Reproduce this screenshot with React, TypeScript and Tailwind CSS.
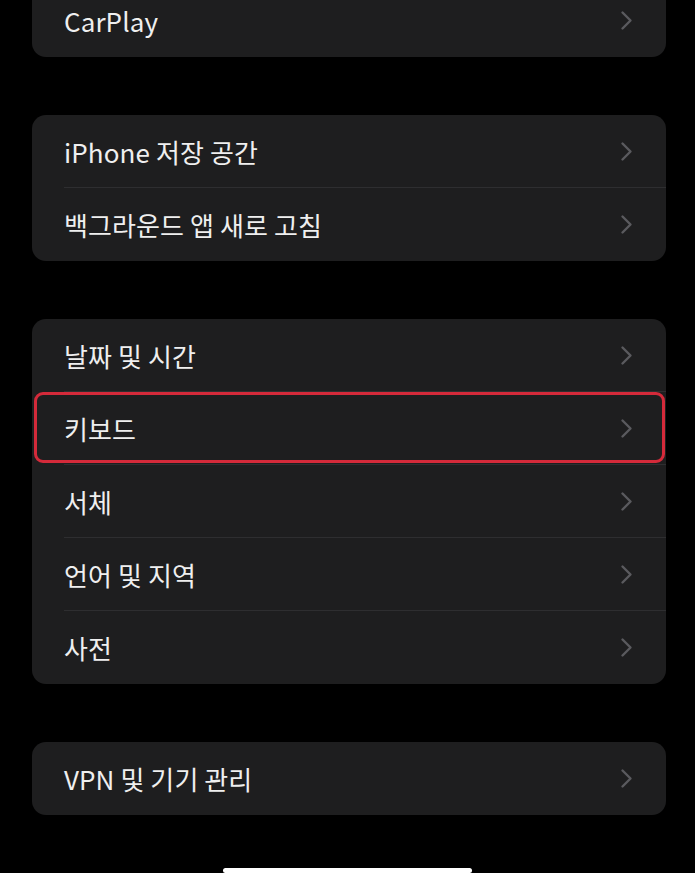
interface Row {
  label: string;
  highlight?: boolean;
}

const groups: Row[][] = [
  [{ label: 'CarPlay' }],
  [{ label: 'iPhone 저장 공간' }, { label: '백그라운드 앱 새로 고침' }],
  [
    { label: '날짜 및 시간' },
    { label: '키보드', highlight: true },
    { label: '서체' },
    { label: '언어 및 지역' },
    { label: '사전' },
  ],
  [{ label: 'VPN 및 기기 관리' }],
];

function Chevron() {
  return (
    <svg width="13" height="21" viewBox="0 0 13 21" fill="none">
      <path
        d="M2.5 2.5 L10.5 10.5 L2.5 18.5"
        stroke="#5a5a5e"
        strokeWidth="2.4"
        strokeLinecap="round"
        strokeLinejoin="round"
      />
    </svg>
  );
}

function SettingsRow({ row, last }: { row: Row; last: boolean }) {
  return (
    <div className="relative h-[73px] flex items-center pl-[32px]">
      <div
        className={
          'flex-1 h-full flex items-center pr-[33px] ' +
          (last ? '' : 'border-b border-[#2e2e30]')
        }
      >
        <span className="flex-1 text-[26px] text-[#efefef] tracking-[0.1px]">{row.label}</span>
        <Chevron />
      </div>
      {row.highlight && (
        <div className="absolute left-[2px] right-[1px] top-0 bottom-[2px] border-[3px] border-[#d42a3a] rounded-[9px]" />
      )}
    </div>
  );
}

export default function App() {
  return (
    <div
      className="h-[873px] bg-black overflow-hidden flex flex-col"
      style={{ fontFamily: '"Noto Sans CJK KR", Inter, sans-serif' }}
    >
      <div className="pl-[32px] pr-[29px] -mt-[16px] flex flex-col gap-[58px]">
        {groups.map((group, i) => (
          <div key={i} className="bg-[#1e1e1f] rounded-[14px] overflow-hidden">
            {group.map((row, j) => (
              <SettingsRow key={row.label} row={row} last={j === group.length - 1} />
            ))}
          </div>
        ))}
      </div>
      <div className="mt-[53px] mx-auto w-[249px] h-[12px] bg-white rounded-[6px]" />
    </div>
  );
}
